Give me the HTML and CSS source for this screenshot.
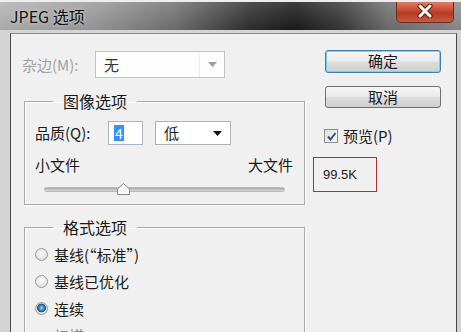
FILE: index.html
```html
<!DOCTYPE html>
<html>
<head>
<meta charset="utf-8">
<link rel="stylesheet" href="styles.css">
</head>
<body>
<div class="window">
  <div class="titlebar">
    <span class="title">JPEG 选项</span>
    <span class="close">
      <svg width="18" height="14" viewBox="0 0 18 14"><path d="M4 2 L14 12 M14 2 L4 12" stroke="#5a1a10" stroke-width="5" stroke-linecap="round"/><path d="M4 2 L14 12 M14 2 L4 12" stroke="#fff" stroke-width="3" stroke-linecap="round"/></svg>
    </span>
  </div>
  <div class="panel">
    <div class="leftcol">
      <div class="matte-row">
        <span class="label disabled">杂边(M):</span>
        <div class="select disabled-select">
          <span class="sel-text">无</span>
          <span class="sel-btn"><svg width="9" height="5" viewBox="0 0 9 5"><path d="M0 0 H9 L4.5 5 Z" fill="#9a9a9a"/></svg></span>
        </div>
      </div>
      <fieldset class="group group1">
        <legend>图像选项</legend>
        <div class="quality-row">
          <span class="label">品质(Q):</span>
          <div class="num-input"><span class="sel">4</span></div>
          <div class="select low-select">
            <span class="sel-text">低</span>
            <svg width="9" height="5" viewBox="0 0 9 5"><path d="M0 0 H9 L4.5 5 Z" fill="#111"/></svg>
          </div>
        </div>
        <div class="size-row">
          <span>小文件</span>
          <span>大文件</span>
        </div>
        <div class="slider">
          <div class="track"></div>
          <svg class="thumb" width="15" height="14" viewBox="0 0 15 14"><path d="M1.5 12.5 V7 L7.5 1.5 L13.5 7 V12.5 Z" fill="#f8f8f8" stroke="#8a8a8a" stroke-width="1"/></svg>
        </div>
      </fieldset>
      <fieldset class="group group2">
        <legend>格式选项</legend>
        <div class="radio-row"><span class="radio"></span><span>基线(“标准”)</span></div>
        <div class="radio-row"><span class="radio"></span><span>基线已优化</span></div>
        <div class="radio-row"><span class="radio checked"></span><span>连续</span></div>
        <div class="radio-row scan-row"><span class="label faded">扫描:</span><div class="scan-input"></div></div>
      </fieldset>
    </div>
    <div class="rightcol">
      <div class="btn default">确定</div>
      <div class="btn">取消</div>
      <div class="check-row">
        <span class="checkbox"><svg width="11" height="11" viewBox="0 0 11 11"><path d="M2 5.5 L4.5 8.5 L9.5 2" fill="none" stroke="#2a4f8a" stroke-width="2"/></svg></span>
        <span>预览(P)</span>
      </div>
      <div class="size-box">99.5K</div>
    </div>
  </div>
</div>
</body>
</html>
```
FILE: styles.css
```css
html, body {
  margin: 0;
  padding: 0;
  background: #d6d6d6;
}
body {
  font-family: "Noto Sans CJK SC", "Noto Sans", sans-serif;
  font-size: 15px;
  color: #1a1a1a;
}
.window {
  width: 461px;
  height: 332px;
  overflow: hidden;
  background: #d4d4d4;
  border-top: 2px solid #eeeeee;
  box-sizing: border-box;
}
.titlebar {
  height: 28px;
  display: flex;
  justify-content: space-between;
  align-items: flex-start;
  background:
    linear-gradient(to bottom, rgba(255,255,255,0.15), rgba(0,0,0,0.05)),
    linear-gradient(to right, #b2b2b2 0%, #9a9a9a 20%, #707070 38%, #303030 54%, #1a1a1a 64%, #383838 74%, #6e6e6e 84%, #8c8c8c 100%);
}
.title {
  margin-left: 10px;
  margin-top: 3px;
  font-size: 16px;
  line-height: 22px;
  color: #111;
  text-shadow: 0 0 4px rgba(255,255,255,0.6);
}
.close {
  width: 58px;
  height: 23px;
  margin-top: -2px;
  margin-right: 7px;
  box-sizing: border-box;
  border: 1px solid #6e2a20;
  border-top: none;
  border-radius: 0 0 5px 5px;
  background: linear-gradient(to bottom, #e08a78 0%, #cf5238 40%, #b53a24 60%, #c85a40 100%);
  display: flex;
  justify-content: center;
  align-items: center;
}
.panel {
  margin-top: 3px;
  margin-left: 10px;
  width: 447px;
  height: 299px;
  box-sizing: border-box;
  border-left: 1px solid #4a4a4a;
  border-right: 1px solid #4a4a4a;
  border-top: 1px solid #8a8a8a;
  background: #f0f0f0;
  display: grid;
  grid-template-columns: 302px 1fr;
}
.leftcol {
  padding-top: 17px;
}
.label {
  line-height: 20px;
}
.disabled {
  color: #a2a2a2;
}
.faded {
  color: #888;
}
.matte-row {
  display: flex;
  align-items: center;
  padding-left: 11px;
  height: 27px;
}
.matte-row .label {
  width: 73px;
}
.select {
  box-sizing: border-box;
  display: flex;
  align-items: center;
  background: #fff;
}
.disabled-select {
  width: 130px;
  height: 27px;
  border: 1px solid #c4c4c4;
  background: #fdfdfd;
}
.sel-text {
  flex: 1;
  padding-left: 8px;
  line-height: 20px;
}
.disabled-select .sel-text {
  color: #333;
}
.sel-btn {
  width: 24px;
  height: 100%;
  border-left: 1px solid #ececec;
  display: flex;
  align-items: center;
  justify-content: center;
}
.group {
  margin: 13px 0 0 13px;
  width: 281px;
  box-sizing: border-box;
  border: 1px solid #a8a8a8;
  box-shadow: inset 1px 1px 0 #fff, 1px 1px 0 #fff;
  padding: 0 10px;
}
.group legend {
  margin-left: 18px;
  padding: 0 10px;
  font-size: 16px;
  line-height: 20px;
}
.group1 {
  height: 114px;
}
.quality-row {
  display: flex;
  align-items: center;
  height: 24px;
  margin-top: 10px;
}
.quality-row .label {
  width: 73px;
}
.num-input {
  width: 35px;
  height: 24px;
  box-sizing: border-box;
  border: 1px solid #a9b6c6;
  background: #fff;
  display: flex;
  align-items: center;
  padding-left: 5px;
}
.num-input .sel {
  background: #3390ff;
  color: #fff;
  line-height: 16px;
  padding: 0 1px;
  font-size: 14px;
}
.low-select {
  margin-left: 12px;
  width: 76px;
  height: 24px;
  border: 1px solid #b0b0b0;
  padding-right: 8px;
}
.size-row {
  display: flex;
  justify-content: space-between;
  margin-top: 9px;
  width: 258px;
  line-height: 22px;
}
.slider {
  position: relative;
  margin: 6px 0 0 9px;
  width: 241px;
  height: 14px;
}
.track {
  position: absolute;
  left: 0;
  right: 0;
  top: 5px;
  height: 5px;
  border-radius: 3px;
  background: linear-gradient(to bottom, #a9a9a9, #d8d8d8);
  border: 1px solid #b8b8b8;
  box-sizing: border-box;
}
.thumb {
  position: absolute;
  left: 72px;
  top: 0;
}
.group2 {
  margin-top: 12px;
  height: 140px;
}
.radio-row {
  display: flex;
  align-items: center;
  height: 27px;
  gap: 6px;
}
.group2 legend + .radio-row {
  margin-top: 4px;
}
.radio {
  width: 13px;
  height: 13px;
  border-radius: 50%;
  box-sizing: border-box;
  border: 1px solid #9a9a9a;
  background: radial-gradient(circle at 50% 40%, #fdfdfd 0%, #e4e4e4 60%, #cfcfcf 100%);
}
.radio.checked {
  background: radial-gradient(circle at 50% 45%, #9ed4f2 0%, #2f7fb8 35%, #1d4f78 50%, #e8e8e8 58%, #d0d0d0 100%);
}
.scan-row {
  gap: 0;
}
.scan-row .label {
  width: 66px;
  padding-left: 19px;
  box-sizing: border-box;
}
.scan-input {
  width: 72px;
  height: 24px;
  margin-top: 20px;
  background: #fff;
  border: 1px solid #c0c0c0;
}
.rightcol {
  padding-top: 16px;
  display: flex;
  flex-direction: column;
  align-items: flex-start;
}
.btn {
  margin-left: 12px;
  width: 116px;
  height: 23px;
  box-sizing: border-box;
  border: 1px solid #707070;
  border-radius: 3px;
  background: linear-gradient(to bottom, #f6f6f6 0%, #ebebeb 48%, #dddddd 52%, #cfcfcf 100%);
  text-align: center;
  line-height: 20px;
  font-size: 15px;
}
.btn.default {
  border-color: #3c7fb1;
  box-shadow: inset 0 0 0 1px #7fd0f0;
}
.btn + .btn {
  margin-top: 13px;
  height: 22px;
}
.check-row {
  margin-top: 19px;
  margin-left: 11px;
  display: flex;
  align-items: center;
  gap: 5px;
  height: 18px;
  line-height: 18px;
}
.checkbox {
  width: 14px;
  height: 14px;
  box-sizing: border-box;
  border: 1px solid #8e8f8f;
  background: linear-gradient(to bottom right, #dcdcdc, #fafafa);
  display: flex;
  align-items: center;
  justify-content: center;
}
.size-box {
  margin-top: 12px;
  width: 64px;
  height: 35px;
  box-sizing: border-box;
  border: 1px solid #b3312b;
  padding-left: 9px;
  font-family: "Liberation Sans", sans-serif;
  font-size: 13px;
  line-height: 33px;
}
```
